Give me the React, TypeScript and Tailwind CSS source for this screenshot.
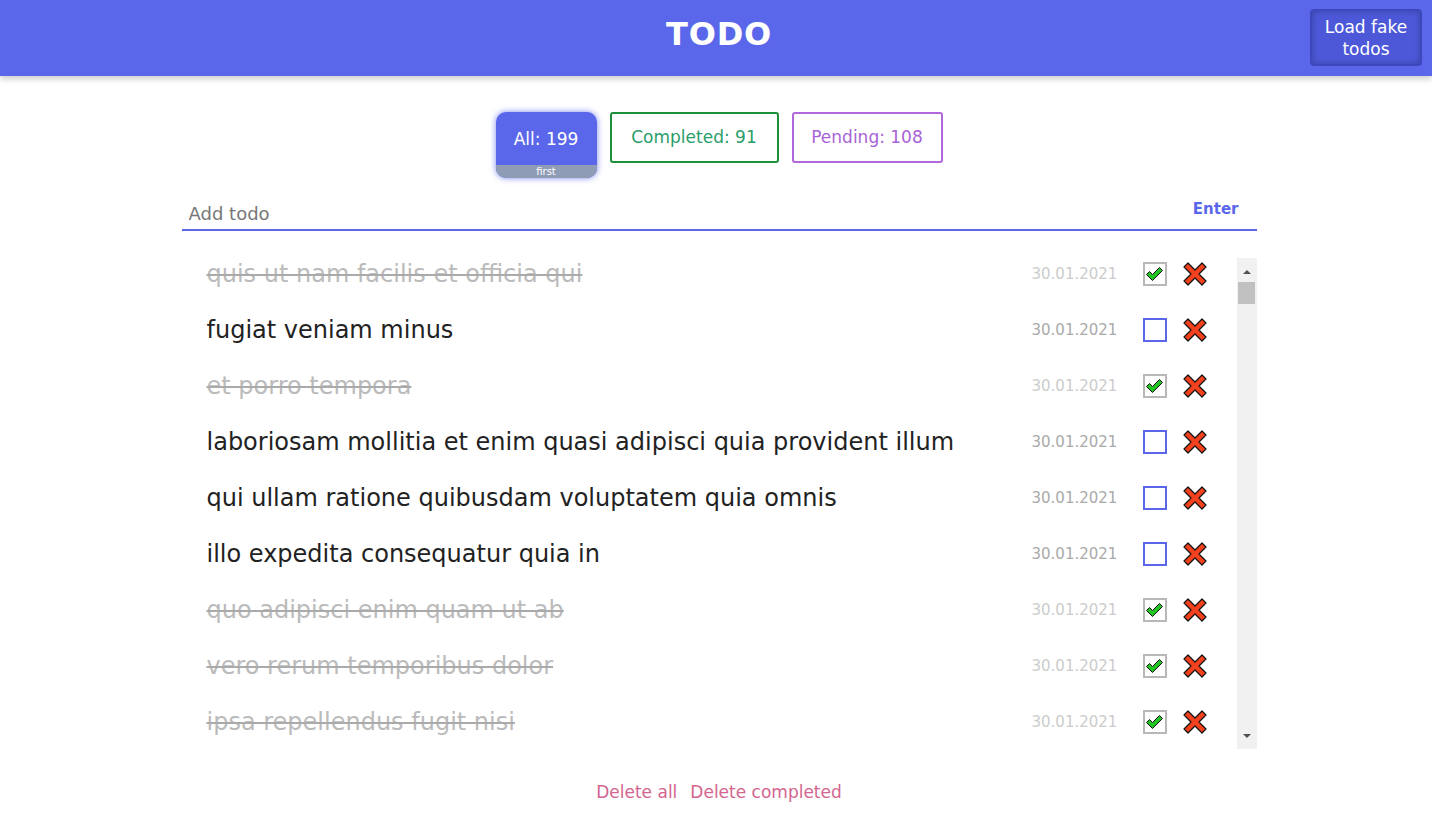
import React from "react";

type Todo = { id: number; title: string; done: boolean };

const todos: Todo[] = [
    { id: 1, title: "quis ut nam facilis et officia qui", done: true },
    { id: 2, title: "fugiat veniam minus", done: false },
    { id: 3, title: "et porro tempora", done: true },
    { id: 4, title: "laboriosam mollitia et enim quasi adipisci quia provident illum", done: false },
    { id: 5, title: "qui ullam ratione quibusdam voluptatem quia omnis", done: false },
    { id: 6, title: "illo expedita consequatur quia in", done: false },
    { id: 7, title: "quo adipisci enim quam ut ab", done: true },
    { id: 8, title: "vero rerum temporibus dolor", done: true },
    { id: 9, title: "ipsa repellendus fugit nisi", done: true },
];

const CheckIcon = () => (
    <svg width="19" height="16" viewBox="0 0 18 16">
        <path
            d="M1 8.5 L4 5.5 L7 8.5 L14 1.5 L17 4.5 L7 14.5 Z"
            fill="#22c322"
            stroke="#111"
            strokeWidth="1"
            strokeLinejoin="round"
        />
    </svg>
);

const CrossIcon = () => (
    <svg width="24" height="24" viewBox="0 0 24 24">
        <path
            d="M5 1 L12 8 L19 1 L23 5 L16 12 L23 19 L19 23 L12 16 L5 23 L1 19 L8 12 L1 5 Z"
            fill="#f2411c"
            stroke="#111"
            strokeWidth="1.2"
            strokeLinejoin="round"
        />
    </svg>
);

const Row = ({ todo }: { todo: Todo }) => (
    <div className="flex items-start h-14 shrink-0 pt-[1px]">
        <div
            className={
                todo.done
                    ? "flex-1 pl-[25px] text-[24px] leading-[30px] text-[#bbbbbb] line-through decoration-[#aaaaaa] decoration-2"
                    : "flex-1 pl-[25px] text-[24px] leading-[30px] text-[#222222]"
            }
        >
            {todo.title}
        </div>
        <div
            className={
                todo.done
                    ? "w-[111px] text-[15px] leading-[30px] text-[#cccccc]"
                    : "w-[111px] text-[15px] leading-[30px] text-[#aaaaaa]"
            }
        >
            30.01.2021
        </div>
        <div className="flex items-center h-[30px] gap-[16px] pr-[30px]">
            {todo.done ? (
                <div className="w-6 h-6 border-2 border-[#b8b8b8] flex items-center justify-center">
                    <CheckIcon />
                </div>
            ) : (
                <div className="w-6 h-6 border-2 border-[#5a67ea]" />
            )}
            <CrossIcon />
        </div>
    </div>
);

const App = () => {
    return (
        <div className="min-h-screen bg-white" style={{ fontFamily: '"DejaVu Sans", sans-serif' }}>
            <header className="relative h-[76px] pl-[6px] pb-[9px] bg-[#5a67ea] shadow-[0_3px_6px_rgba(0,0,0,0.2)] flex items-center justify-center">
                <h1 className="text-white text-[32px] font-bold tracking-wide">TODO</h1>
                <button className="absolute right-[10px] top-[9px] w-[112px] h-[57px] bg-[#4c58d8] border-2 border-[#3d48bd] rounded-[4px] shadow-[inset_0_0_6px_rgba(0,0,0,0.25)] text-white text-[17px] leading-[22px]">
                    Load fake
                    <br />
                    todos
                </button>
            </header>

            <div className="pl-[6px]">
                <div className="flex justify-center gap-[13px] mt-[36px]">
                    <button className="w-[101px] h-[66px] rounded-[10px] bg-[#5a67ea] shadow-[0_0_6px_rgba(90,103,234,0.8)] flex flex-col overflow-hidden">
                        <span className="flex-1 flex items-center justify-center pt-[2px] text-white text-[17px]">All: 199</span>
                        <span className="h-[13px] bg-[#8e9cb5] text-white text-[10px] leading-[13px]">first</span>
                    </button>
                    <button className="w-[169px] h-[51px] rounded-[3px] border-2 border-[#1e8f3a] text-[#2a9d6a] text-[17px]">
                        Completed: 91
                    </button>
                    <button className="w-[151px] h-[51px] rounded-[3px] border-2 border-[#b068db] text-[#a863d6] text-[17px]">
                        Pending: 108
                    </button>
                </div>

                <div className="mx-auto w-[1075px] mt-[11px]">
                    <div className="flex items-end justify-between border-b-2 border-[#5a67ea] h-[42px]">
                        <input
                            placeholder="Add todo"
                            className="flex-1 pl-[7px] pb-[2px] text-[18px] outline-none placeholder:text-[#777777]"
                        />
                        <span className="pr-[18px] pb-[9px] text-[#5a67ea] text-[15px] font-bold">Enter</span>
                    </div>

                    <div className="mt-[27px] h-[491px] flex">
                        <div className="flex-1 flex flex-col overflow-hidden">
                            {todos.map((t) => (
                                <Row key={t.id} todo={t} />
                            ))}
                        </div>
                        <div className="w-[20px] bg-[#f1f1f1] flex flex-col items-center">
                            <svg width="20" height="20" viewBox="0 0 20 20" className="mt-[4px] shrink-0">
                                <path d="M6 12 L10 8 L14 12 Z" fill="#505050" />
                            </svg>
                            <div className="w-[17px] h-[22px] bg-[#c1c1c1]" />
                            <div className="flex-1" />
                            <svg width="20" height="20" viewBox="0 0 20 20" className="mb-[3px] shrink-0">
                                <path d="M6 8 L10 12 L14 8 Z" fill="#505050" />
                            </svg>
                        </div>
                    </div>

                    <div className="flex justify-center gap-[13px] mt-[31px] text-[17px] text-[#d3658f]">
                        <span>Delete all</span>
                        <span>Delete completed</span>
                    </div>
                </div>
            </div>
        </div>
    );
};

export default App;
